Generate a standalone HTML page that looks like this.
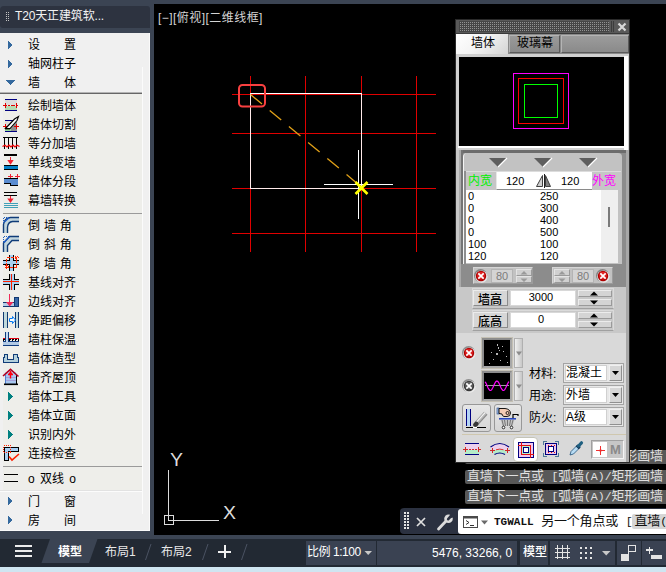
<!DOCTYPE html>
<html lang="zh-CN">
<head>
<meta charset="utf-8">
<title>T20天正建筑软件</title>
<style>
html,body{margin:0;padding:0;}
body{width:666px;height:572px;overflow:hidden;background:#3b4453;position:relative;
 font-family:"Liberation Sans","Noto Sans CJK SC",sans-serif;font-size:12px;color:#000;}
.abs{position:absolute;}
#canvas{left:154px;top:4px;width:512px;height:531px;background:#000;}
#vp{left:158px;top:10px;color:#d4d4d4;font-size:12px;line-height:16px;white-space:nowrap;letter-spacing:0.45px;}
/* left panel */
#ltitle{left:0;top:6px;width:150px;height:22px;background:#2d3340;border-radius:4px 3px 0 3px;}
#ltitle span{position:absolute;left:15px;top:2px;color:#f2f2f2;font-size:12px;line-height:17px;white-space:nowrap;letter-spacing:-0.15px;}
#lpanel{left:0;top:33px;width:150px;height:498px;background:#f0f0f0;box-shadow:inset -1px -1px 0 #fafafa;}
#linner{left:3px;top:94px;width:139px;height:396px;background:#eeeeea;}
#lvl{left:142px;top:67px;width:1px;height:447px;background:#fbfbfb;}
#lhl{left:0;top:490px;width:142px;height:2px;background:linear-gradient(#e2e2e2 50%,#fcfcfc 50%);}
.mi{position:absolute;left:28px;height:19px;line-height:19px;font-size:12px;color:#000;white-space:pre;word-spacing:0.6px;}
.sep{position:absolute;left:0;width:142px;height:1px;background:#9a9a9a;}
/* status bar */
#sbar{left:0;top:539px;width:666px;height:28px;background:#222933;}
#sbot{left:0;top:567px;width:666px;height:5px;background:#cfe5f1;}
.st{position:absolute;color:#e8e8e8;font-size:12px;line-height:16px;white-space:nowrap;}

.cl{position:absolute;left:465px;height:14px;width:230px;background:#585858;border-radius:2px;color:#e0e0e0;font-size:13px;line-height:14px;white-space:pre;font-family:"Liberation Mono","Noto Sans CJK SC",monospace;padding-left:2px;letter-spacing:-0.2px;}
.cl i,.cmd i{font-style:normal;font-size:11.5px;letter-spacing:0;}
#cbar{left:400px;top:508px;width:266px;height:26px;background:#2b3140;border-radius:4px 0 0 4px;}
#cwhite{left:458px;top:509px;width:208px;height:25px;background:#fff;border-radius:3px 0 0 3px;}
.cmd{position:absolute;left:494px;top:514px;height:16px;line-height:16px;font-size:13px;color:#111;white-space:pre;font-family:"Liberation Mono","Noto Sans CJK SC",monospace;letter-spacing:-0.2px;}
.cmd b{font-size:11px;letter-spacing:0;}
.cmd .hl{background:#d6d6d6;border-radius:2px;padding:0 0 0 3px;margin-left:-1px;}
.sb{position:absolute;top:541px;height:24px;background:#3a4252;}
</style>
</head>
<body>
<div id="canvas" class="abs"></div>
<div id="vp" class="abs">[−][俯视][二维线框]</div>

<svg class="abs" style="left:0;top:0" width="666" height="572" viewBox="0 0 666 572">
<g shape-rendering="crispEdges" fill="#e00000">
<rect x="250" y="76" width="1" height="176"/><rect x="305" y="76" width="1" height="176"/><rect x="361" y="76" width="1" height="176"/><rect x="416" y="76" width="1" height="176"/>
<rect x="232" y="94" width="204" height="1"/><rect x="232" y="133" width="204" height="1"/><rect x="232" y="188" width="204" height="1"/><rect x="232" y="233" width="204" height="1"/>
</g>
<g shape-rendering="crispEdges" fill="#ffeaea">
<rect x="250" y="93" width="112" height="1" fill="#fff"/>
<rect x="250" y="93" width="1" height="96"/>
<rect x="361" y="93" width="1" height="96"/>
<rect x="250" y="188" width="112" height="1"/>
</g>
<rect x="239" y="85" width="26" height="21.500" rx="3.500" fill="none" stroke="#f84040" stroke-width="2"/>
<path d="M250.500 94.500 L358.500 184.500" stroke="#e0a018" stroke-width="1.300" stroke-dasharray="15 10" fill="none"/>
<g shape-rendering="crispEdges" fill="#fff">
<rect x="358" y="150" width="1" height="69"/><rect x="324" y="184" width="69" height="1"/>
</g>
<path d="M355.500 182 L367.500 194 M367.500 182 L355.500 194" stroke="#ffff00" stroke-width="2.600" fill="none"/>
<!-- UCS -->
<g shape-rendering="crispEdges" fill="none" stroke="#dcdcdc" stroke-width="1">
<path d="M168.500 470 V520.500 H219"/>
<rect x="164.500" y="515.500" width="9" height="9"/>
</g>
<text x="176.500" y="466" font-family="Liberation Sans, sans-serif" font-size="17.500" fill="#dcdcdc" text-anchor="middle" textLength="13" lengthAdjust="spacingAndGlyphs">Y</text>
<text x="229.500" y="519" font-family="Liberation Sans, sans-serif" font-size="17.500" fill="#dcdcdc" text-anchor="middle" textLength="13" lengthAdjust="spacingAndGlyphs">X</text>
</svg>

<!-- LEFT PANEL -->
<div id="ltitle" class="abs"><span>T20天正建筑软...</span></div>
<svg class="abs" style="left:0;top:6px" width="14" height="22" viewBox="0 0 14 22"><g fill="#c4c4c4" shape-rendering="crispEdges"><rect x="6" y="6" width="1" height="1"/><rect x="6" y="8" width="1" height="1"/><rect x="6" y="10" width="1" height="1"/><rect x="6" y="12" width="1" height="1"/><rect x="6" y="14" width="1" height="1"/><rect x="8" y="6" width="1" height="1"/><rect x="8" y="8" width="1" height="1"/><rect x="8" y="10" width="1" height="1"/><rect x="8" y="12" width="1" height="1"/><rect x="8" y="14" width="1" height="1"/></g></svg>
<div id="lpanel" class="abs"></div>
<div id="linner" class="abs"></div><div id="lvl" class="abs"></div><div id="lhl" class="abs"></div>
<div id="lmenu" class="abs" style="left:0;top:0;">
<div class="sep" style="top:92px;background:#b4b4b4;"></div><div class="sep" style="top:93px;background:#666;"></div>
<div class="sep" style="top:213px;left:3px;width:139px;"></div>
<div class="sep" style="top:466px;left:3px;width:139px;"></div>
<div class="mi" style="top:35.5px">设　　置</div>
<div class="mi" style="top:54.5px">轴网柱子</div>
<div class="mi" style="top:73.5px">墙　　体</div>
<div class="mi" style="top:97px">绘制墙体</div>
<div class="mi" style="top:116px">墙体切割</div>
<div class="mi" style="top:135px">等分加墙</div>
<div class="mi" style="top:154px">单线变墙</div>
<div class="mi" style="top:173px">墙体分段</div>
<div class="mi" style="top:192px">幕墙转换</div>
<div class="mi" style="top:216.5px">倒 墙 角</div>
<div class="mi" style="top:235.5px">倒 斜 角</div>
<div class="mi" style="top:254.5px">修 墙 角</div>
<div class="mi" style="top:273.5px">基线对齐</div>
<div class="mi" style="top:292.5px">边线对齐</div>
<div class="mi" style="top:311.5px">净距偏移</div>
<div class="mi" style="top:330.5px">墙柱保温</div>
<div class="mi" style="top:349.5px">墙体造型</div>
<div class="mi" style="top:368.5px">墙齐屋顶</div>
<div class="mi" style="top:387.5px">墙体工具</div>
<div class="mi" style="top:406.5px">墙体立面</div>
<div class="mi" style="top:425.5px">识别内外</div>
<div class="mi" style="top:444.5px">连接检查</div>
<div class="mi" style="top:469.5px;word-spacing:2px">o 双线 o</div>
<div class="mi" style="top:492.5px">门　　窗</div>
<div class="mi" style="top:511.5px">房　　间</div>
</div>

<svg class="abs" style="left:0;top:0" width="160" height="540" viewBox="0 0 160 540">
<g shape-rendering="crispEdges">
<!-- triangles top -->
<path d="M8 40.5 L13 45 L8 49.5Z" fill="#34699e"/>
<path d="M8 59.5 L13 64 L8 68.5Z" fill="#34699e"/>
<path d="M6 80 L15 80 L10.5 85Z" fill="#34699e"/>
<path d="M8 496.5 L13 501 L8 505.5Z" fill="#34699e"/>
<path d="M8 515.5 L13 520 L8 524.5Z" fill="#34699e"/>
<!-- teal triangles -->
<path d="M8 392 L13 396.5 L8 401Z" fill="#008080"/>
<path d="M8 411 L13 415.5 L8 420Z" fill="#008080"/>
<path d="M8 430 L13 434.5 L8 439Z" fill="#008080"/>
<!-- i1 绘制墙体 -->
<rect x="5" y="99" width="12" height="1" fill="#000080"/>
<rect x="5" y="100" width="12" height="5" fill="#dcdcdc"/>
<rect x="5" y="106" width="12" height="4" fill="#b4dcb4"/>
<rect x="5" y="110" width="12" height="1" fill="#000080"/>
<path d="M3 105.5H19" stroke="#e00000" stroke-width="1" stroke-dasharray="4 1 2 1"/>
<rect x="5" y="103" width="1" height="5" fill="#e00000"/><rect x="16" y="103" width="1" height="5" fill="#e00000"/>
<!-- i2 墙体切割 -->
<rect x="5" y="120" width="8" height="1" fill="#000080"/>
<rect x="5" y="121" width="8" height="5" fill="#dcdcdc"/>
<path d="M17 121 L17 131 L8 131Z" fill="#909090"/>
<rect x="5" y="129" width="6" height="2" fill="#98dc98"/>
<rect x="5" y="131" width="12" height="1" fill="#000080"/>
<rect x="3" y="126" width="5" height="1" fill="#e00000"/><rect x="14" y="126" width="5" height="1" fill="#e00000"/>
<rect x="5" y="124" width="1" height="5" fill="#e00000"/><rect x="16" y="124" width="1" height="5" fill="#e00000"/>
</g>
<path d="M5.500 128.500 L14.500 119 L18.500 116.500 L17 120.500 L10 128.500Z" fill="#fff" stroke="#000" stroke-width="1.100"/>
<path d="M5 128.700 H10" stroke="#000" stroke-width="1.400"/>
<g shape-rendering="crispEdges">
<!-- i3 等分加墙 -->
<rect x="3" y="137" width="15" height="1" fill="#000"/>
<rect x="4" y="137" width="1" height="12" fill="#000"/><rect x="8" y="137" width="1" height="12" fill="#000"/><rect x="12" y="137" width="1" height="12" fill="#000"/><rect x="16" y="137" width="1" height="12" fill="#000"/>
</g>
<path d="M2.500 146.500 L5 145.200 L7 147 L9 145.200 L11 147 L13 145.200 L15 147 L17 145.200 L19.500 146.500" fill="none" stroke="#f00000" stroke-width="1.300"/>
<g shape-rendering="crispEdges">
<!-- i4 单线变墙 -->
<rect x="4" y="154" width="13" height="2" fill="#000"/>
<rect x="10" y="157" width="1" height="6" fill="#f02030"/>
</g><path d="M7.300 160 H13.700 L10.500 164.800Z" fill="#f02030"/><g shape-rendering="crispEdges">
<rect x="4" y="165" width="14" height="1" fill="#000"/>
<rect x="4" y="166" width="14" height="3" fill="#0080c8"/>
<rect x="4" y="169" width="14" height="1" fill="#000"/>
<!-- i5 墙体分段 -->
<rect x="10" y="174" width="1" height="5" fill="#f02030"/><rect x="8" y="176" width="5" height="1" fill="#f02030"/>
<rect x="17" y="174" width="1" height="5" fill="#f02030"/><rect x="15" y="176" width="5" height="1" fill="#f02030"/>
<path d="M4 179 H18 V185 H10 V183 H4Z" fill="#5a8cd0"/>
<rect x="4" y="178" width="14" height="1" fill="#000"/>
<rect x="4" y="183" width="7" height="1" fill="#000"/><rect x="10" y="183" width="1" height="2" fill="#000"/><rect x="10" y="185" width="8" height="1" fill="#000"/>
<!-- i6 幕墙转换 -->
<rect x="4" y="192" width="13" height="1" fill="#000"/><rect x="4" y="195" width="13" height="1" fill="#000"/>
<rect x="10" y="196" width="1" height="6" fill="#f02030"/>
</g><path d="M7.300 198.500 H13.700 L10.500 203Z" fill="#f02030"/><g shape-rendering="crispEdges">
<rect x="4" y="203" width="14" height="1" fill="#40a0b8"/><rect x="4" y="205" width="14" height="1" fill="#40a0b8"/><rect x="4" y="207" width="14" height="1" fill="#40a0b8"/>
</g>
</svg>
<svg class="abs" style="left:0;top:0" width="160" height="540" viewBox="0 0 160 540">
<!-- i7 倒墙角 -->
<path d="M3 233 V224 Q4 218 10.500 217 H19 V222 H12.500 Q8 222.500 8 227 V233Z" fill="#c2d6de"/>
<path d="M3.500 233 V224.500 Q4.500 218 10.500 217.500 H19 M7.500 233 V227 Q8 222 12.500 221.500 H19" fill="none" stroke="#103c78" stroke-width="1.400"/>
<path d="M4.500 222 L9 217.800" stroke="#2060d0" stroke-width="1.200"/>
<path d="M3.500 217.500 H9 M3.500 217.500 V223" stroke="#2060c0" stroke-width="1" stroke-dasharray="1 1" shape-rendering="crispEdges"/>
<!-- i8 倒斜角 -->
<path d="M3 252 V243 L9.500 236 H19 V241 H12 L8 245.500 V252Z" fill="#c2d6de"/>
<path d="M3.500 252 V243 L9.500 236.500 H19 M7.500 252 V245.500 L12 240.500 H19" fill="none" stroke="#103c78" stroke-width="1.400"/>
<path d="M4 242.500 L9.500 236.700" stroke="#2060d0" stroke-width="1.200"/>
<path d="M3.500 236.500 H9 M3.500 236.500 V242" stroke="#2060c0" stroke-width="1" stroke-dasharray="1 1" shape-rendering="crispEdges"/>
<g shape-rendering="crispEdges">
<!-- i9 修墙角 -->
<rect x="10" y="255" width="3" height="16" fill="#a8d0f0"/><rect x="3" y="261" width="16" height="3" fill="#a8d0f0"/>
<rect x="9" y="255" width="1" height="6" fill="#000"/><rect x="13" y="255" width="1" height="6" fill="#000"/>
<rect x="9" y="264" width="1" height="7" fill="#000"/><rect x="13" y="264" width="1" height="7" fill="#000"/>
<rect x="3" y="260" width="7" height="1" fill="#000"/><rect x="13" y="260" width="6" height="1" fill="#000"/>
<rect x="3" y="264" width="7" height="1" fill="#000"/><rect x="13" y="264" width="6" height="1" fill="#000"/>
<rect x="6.500" y="257.500" width="10" height="10" fill="none" stroke="#ff2800" stroke-width="1" stroke-dasharray="3 1"/>
<path d="M15 256 l3 3 M17 256 l2 2 M15 258 l2 2 M5 265 l3 3 M5 267 l2 2 M7 265 l2 2" stroke="#ff2800" stroke-width="1" stroke-dasharray="1 1"/>
<!-- i10 基线对齐 -->
<rect x="10" y="274" width="4" height="16" fill="#a8d0f0"/><rect x="3" y="280" width="16" height="4" fill="#a8d0f0"/>
<rect x="9" y="274" width="1" height="6" fill="#000"/><rect x="14" y="274" width="1" height="6" fill="#000"/>
<rect x="9" y="284" width="1" height="6" fill="#000"/><rect x="14" y="284" width="1" height="6" fill="#000"/>
<rect x="3" y="279" width="7" height="1" fill="#000"/><rect x="14" y="279" width="5" height="1" fill="#000"/>
<rect x="3" y="284" width="7" height="1" fill="#000"/><rect x="14" y="284" width="5" height="1" fill="#000"/>
<rect x="11" y="274" width="1" height="16" fill="#ff2000"/><rect x="3" y="281" width="16" height="1" fill="#ff2000"/>
<!-- i11 边线对齐 -->
<rect x="3" y="303" width="12" height="3" fill="#b4cce8"/>
<rect x="3" y="302" width="12" height="1" fill="#103870"/>
<rect x="14" y="297" width="5" height="10" fill="#3868a8" stroke="none"/>
<rect x="14" y="297" width="5" height="1" fill="#103870"/><rect x="14" y="297" width="1" height="10" fill="#103870"/><rect x="18" y="297" width="1" height="10" fill="#103870"/>
<rect x="3" y="306" width="16" height="1" fill="#103870"/>
<rect x="9" y="294" width="1" height="9" fill="#f02858"/>
</g>
<path d="M6 302 H13.500 L9.700 306.500Z" fill="#f02858"/>
<g shape-rendering="crispEdges">
<!-- i12 净距偏移 -->
<rect x="4" y="312" width="3" height="16" fill="#c0d8dc"/><rect x="3" y="312" width="1" height="16" fill="#103870"/><rect x="7" y="312" width="1" height="16" fill="#103870"/>
<rect x="16" y="312" width="2" height="16" fill="#c0d8dc"/><rect x="15" y="312" width="1" height="16" fill="#103870"/><rect x="18" y="312" width="1" height="16" fill="#103870"/>
</g>
<path d="M9.500 318.500 H12.500 V316.500 L15.500 320 L12.500 323.500 V321.500 H9.500Z" fill="#fff" stroke="#0078f0" stroke-width="1"/>
<g shape-rendering="crispEdges">
<!-- i13 墙柱保温 -->
<rect x="6" y="332" width="2" height="10" fill="#c4d8f0"/><rect x="5" y="332" width="1" height="10" fill="#103c80"/><rect x="8" y="332" width="1" height="10" fill="#103c80"/>
<rect x="3" y="342" width="16" height="3" fill="#b0c8e4"/>
<rect x="3" y="341" width="3" height="1" fill="#103c80"/><rect x="8" y="341" width="11" height="1" fill="#103c80"/>
<rect x="3" y="345" width="16" height="1" fill="#103c80"/>
<rect x="3" y="338" width="2" height="1" fill="#e00010"/><rect x="9" y="338" width="10" height="1" fill="#e00010"/>
<path d="M3 339.500 H5 M9 339.500 H19" stroke="#000" stroke-width="1" stroke-dasharray="2 1"/>
<path d="M3 340.500 H5 M9 340.500 H19" stroke="#000" stroke-width="1" stroke-dasharray="1 2"/>
<!-- i14 墙体造型 -->
<path d="M3.500 357.500 H4.500 V354.500 H7.500 V359.500 H13.500 V354.500 H17.500 V357.500 H18.500 V362.500 H3.500Z" fill="#b4d0dc" stroke="#103c78" stroke-width="1"/>
</g>
<!-- i15 墙齐屋顶 -->
<rect x="5" y="372" width="11" height="12" fill="#a8c8f0"/>
<path d="M5 373 L10.500 369 L16 373Z" fill="#c8e0fa"/>
<path d="M5 377.500 H16 M5 380.500 H16" stroke="#a090d0" stroke-width="1" opacity=".7"/>
<rect x="16" y="375" width="1" height="9" fill="#000"/>
<rect x="5" y="375" width="1" height="9" fill="#5080d0"/>
<path d="M3 376 L10.500 369.300 L18.500 376.500" fill="none" stroke="#b00020" stroke-width="1.600"/>
<rect x="4" y="383.500" width="14" height="1.600" fill="#000"/>
<path d="M10.500 371 V378.500 M8 374.500 H13" stroke="#ff0010" stroke-width="1.400"/>
<path d="M8.500 374 L10.500 371 L12.500 374Z" fill="#ff0010"/>
<g shape-rendering="crispEdges">
<!-- i16 连接检查 -->
<rect x="5" y="448" width="13" height="3" fill="#a8d0f4"/><rect x="5" y="448" width="3" height="12" fill="#a8d0f4"/>
<path d="M4.500 447.500 H18.500 V451.500 H8.500 V460.500 H4.500Z" fill="none" stroke="#000" stroke-width="1"/>
<rect x="3.500" y="445.500" width="7" height="7" fill="none" stroke="#ff2000" stroke-width="1" stroke-dasharray="1 1"/>
</g>
<path d="M9 456.500 L12 460 L19 454" fill="none" stroke="#ff2000" stroke-width="1.600"/>
<g shape-rendering="crispEdges">
<!-- i17 双线 -->
<rect x="4" y="474" width="14" height="1" fill="#000"/><rect x="4" y="481" width="14" height="1" fill="#000"/>
</g>
</svg>

<!-- COMMAND HISTORY -->
<div class="cl" style="top:450px;">直墙下一点或 <i>[</i>弧墙<i>(A)/</i>矩形画墙</div>
<div class="cl" style="top:470px;">直墙下一点或 <i>[</i>弧墙<i>(A)/</i>矩形画墙</div>
<div class="cl" style="top:490px;">直墙下一点或 <i>[</i>弧墙<i>(A)/</i>矩形画墙</div>
<!-- RIGHT PANEL -->
<style>
#rp{left:455px;top:19px;width:175px;height:444px;background:#e4e4e4;box-sizing:border-box;border:1px solid #2a2a2a;font-size:12px;}
#rp div,#rp span{position:absolute;box-sizing:border-box;}
#rp .t{white-space:nowrap;line-height:14px;}
#rp .n{font-size:11px;line-height:12px;white-space:nowrap;}
.grip{background-image:linear-gradient(90deg,#454545 50%,transparent 50%),linear-gradient(#454545 50%,#929292 50%);background-size:2px 2px;}
</style>
<div id="rp" class="abs">
<!-- coordinates inside #rp are page - (456,20) -->
<div style="left:0;top:0;width:173px;height:13px;background:#595959;"></div>
<div class="grip" style="left:3px;top:1px;width:150px;height:11px;"></div>
<div style="left:155px;top:1px;width:1px;height:11px;background:#3c3c3c;"></div><div style="left:157px;top:1px;width:1px;height:11px;background:#3c3c3c;"></div>
<div style="left:0;top:13px;width:173px;height:1px;background:#3a3a3a;"></div>
<svg style="position:absolute;left:160px;top:1px" width="12" height="12" viewBox="0 0 12 12"><path d="M2.500 2.500 L9.500 9.500 M9.500 2.500 L2.500 9.500" stroke="#d8d8d8" stroke-width="2.200" fill="none"/></svg>
<!-- tabs -->
<div style="left:0;top:14px;width:173px;height:20px;background:#8a8a8a;"></div>
<div style="left:0;top:14px;width:52px;height:20px;background:linear-gradient(135deg,#ffffff 0%,#f4f4f4 45%,#d4d4d4 100%);"></div>
<div class="t" style="left:15px;top:16px;">墙体</div>
<div style="left:53px;top:15px;width:51px;height:18px;background:linear-gradient(#9a9a9a,#8a8a8a);border:1px solid #b4b4b4;border-right-color:#5a5a5a;border-bottom-color:#5a5a5a;"></div>
<div class="t" style="left:61px;top:16px;">玻璃幕</div>
<div style="left:105px;top:15px;width:68px;height:18px;background:linear-gradient(#9c9c9c,#8a8a8a);border:1px solid #b4b4b4;border-right-color:#5a5a5a;border-bottom-color:#5a5a5a;"></div>
<!-- preview -->
<div style="left:0;top:34px;width:173px;height:96px;background:#d0d0d0;"></div>
<div style="left:168px;top:36px;width:4px;height:94px;background:#fff;"></div>
<div style="left:2px;top:126px;width:170px;height:2px;background:#fff;"></div>
<div style="left:3px;top:37px;width:165px;height:89px;background:#000;"></div>
<div style="left:57px;top:53px;width:56px;height:56px;border:1px solid #ff00ff;"></div>
<div style="left:62px;top:58px;width:46px;height:46px;border:1px solid #ff0000;"></div>
<div style="left:68px;top:64px;width:34px;height:34px;border:1px solid #00ff00;"></div>
<!-- middle gray frame -->
<div style="left:0;top:130px;width:173px;height:183px;background:#c8c8c8;"></div>
<div style="left:3px;top:130px;width:167px;height:137px;background:#8c8c8c;"></div>
<div style="left:3px;top:130px;width:2px;height:137px;background:#aaaaaa;"></div>
<div style="left:5px;top:130px;width:165px;height:3px;background:#6c6c6c;"></div>
<div style="left:5px;top:130px;width:2px;height:114px;background:#747474;"></div>
<div style="left:7px;top:133px;width:159px;height:111px;background:#c2c2c2;border-radius:4px 4px 0 0;border-left:1px solid #f4f4f4;"></div>

<!-- triangles -->
<svg style="position:absolute;left:0;top:0" width="173" height="442" viewBox="0 0 173 442">
<g>
<path d="M33 138 H51 L42 147Z" fill="#5e5e5e"/><path d="M51 138 L42 147" stroke="#fff" stroke-width="1.200"/>
<path d="M78 138 H96 L87 147Z" fill="#5e5e5e"/><path d="M96 138 L87 147" stroke="#fff" stroke-width="1.200"/>
<path d="M123 138 H141 L132 147Z" fill="#5e5e5e"/><path d="M141 138 L132 147" stroke="#fff" stroke-width="1.200"/>
</g>
</svg>
<!-- width row: page y 171..189 => 151..169 -->
<div style="left:10px;top:151px;width:155px;height:19px;background:#c6c6c6;border-top:1px solid #dcdcdc;"></div>
<div style="left:40px;top:152px;width:96px;height:18px;background:#fff;border-bottom:1px solid #8a8a8a;border-left:1px solid #e8e8e8;"></div>
<div class="t" style="left:12px;top:154px;color:#00f000;">内宽</div>
<div class="t" style="left:136px;top:154px;color:#ff00ff;">外宽</div>
<div class="n" style="left:50px;top:155px;">120</div>
<div class="n" style="left:105px;top:155px;">120</div>
<svg style="position:absolute;left:78px;top:154px" width="20" height="14" viewBox="0 0 20 14">
<path d="M8.500 1.500 V12.500 H2.500Z" fill="#d0d0d0" stroke="#404040" stroke-width="1"/>
<path d="M11.500 1.500 V12.500 H16.500Z" fill="#808080" stroke="#404040" stroke-width="1"/>
<path d="M10 0 V14" stroke="#202020" stroke-width="1" shape-rendering="crispEdges"/>
</svg>
<!-- list: page y190..263 => 170..243; x 466..618 => 10..162 -->
<div style="left:10px;top:170px;width:152px;height:73px;background:#fff;"></div>
<div style="left:145px;top:170px;width:17px;height:73px;background:#efefef;"></div>
<div style="left:8px;top:151px;width:2px;height:93px;background:#8e8e8e;"></div>
<div style="left:152px;top:187px;width:2px;height:20px;background:#7a7a7a;"></div>
<div class="n" style="left:12px;top:170px;line-height:12px;white-space:pre;">0
0
0
0
100
120</div>
<div class="n" style="left:84px;top:170px;line-height:12px;white-space:pre;">250
300
400
500
100
120</div>

<!-- 80 row : rp y 247..264 -->
<div style="left:17px;top:247px;width:60px;height:17px;background:#c2c2c2;border:1px solid #d6d6d6;border-right-color:#9c9c9c;border-bottom-color:#9c9c9c;"></div>
<div style="left:96px;top:247px;width:61px;height:17px;background:#c2c2c2;border:1px solid #d6d6d6;border-right-color:#9c9c9c;border-bottom-color:#9c9c9c;"></div>
<div style="left:35px;top:249px;width:22px;height:14px;background:#d4d4d4;border:1px solid #b4b4b4;"></div>
<div class="n" style="left:40px;top:250px;color:#7c7c7c;">80</div>
<div style="left:116px;top:249px;width:22px;height:14px;background:#d4d4d4;border:1px solid #b4b4b4;"></div>
<div class="n" style="left:121px;top:250px;color:#7c7c7c;">80</div>
<div style="left:60px;top:249px;width:16px;height:7px;background:#d0d0d0;border:1px solid #e4e4e4;border-right-color:#9a9a9a;border-bottom-color:#9a9a9a;"></div>
<div style="left:60px;top:256px;width:16px;height:7px;background:#d0d0d0;border:1px solid #e4e4e4;border-right-color:#9a9a9a;border-bottom-color:#9a9a9a;"></div>
<div style="left:98px;top:249px;width:16px;height:7px;background:#d0d0d0;border:1px solid #e4e4e4;border-right-color:#9a9a9a;border-bottom-color:#9a9a9a;"></div>
<div style="left:98px;top:256px;width:16px;height:7px;background:#d0d0d0;border:1px solid #e4e4e4;border-right-color:#9a9a9a;border-bottom-color:#9a9a9a;"></div>
<svg style="position:absolute;left:17px;top:248px" width="16" height="16" viewBox="0 0 16 16"><circle cx="7.600" cy="7.600" r="6.600" fill="#505050" opacity=".55"/><circle cx="8.400" cy="8.600" r="6.200" fill="#f4f4f4" opacity=".8"/><circle cx="8" cy="8" r="5.200" fill="#b00000"/><circle cx="8" cy="7.600" r="3.800" fill="#f03030" opacity=".75"/><path d="M5.900 5.900 L10.100 10.100 M10.100 5.900 L5.900 10.100" stroke="#fff" stroke-width="1.700" stroke-linecap="square"/></svg><svg style="position:absolute;left:139px;top:248px" width="16" height="16" viewBox="0 0 16 16"><circle cx="7.600" cy="7.600" r="6.600" fill="#505050" opacity=".55"/><circle cx="8.400" cy="8.600" r="6.200" fill="#f4f4f4" opacity=".8"/><circle cx="8" cy="8" r="5.200" fill="#b00000"/><circle cx="8" cy="7.600" r="3.800" fill="#f03030" opacity=".75"/><path d="M5.900 5.900 L10.100 10.100 M10.100 5.900 L5.900 10.100" stroke="#fff" stroke-width="1.700" stroke-linecap="square"/></svg>
<!-- 墙高 / 底高 rows -->
<div style="left:16px;top:268px;width:142px;height:21px;border:1px solid #dadada;border-bottom-color:#a0a0a0;"></div>
<div style="left:16px;top:290px;width:142px;height:21px;border:1px solid #dadada;border-bottom-color:#a0a0a0;"></div>
<div style="left:17px;top:270px;width:35px;height:16px;background:#d6d6d6;border:1px solid #ececec;border-right-color:#8c8c8c;border-bottom-color:#8c8c8c;"></div>
<div class="t" style="left:22px;top:273px;font-weight:500;">墙高</div>
<div style="left:54px;top:270px;width:66px;height:16px;background:#fff;border:1px solid #d8d8d8;"></div>
<div class="n" style="left:52px;top:271px;width:66px;text-align:center;">3000</div>
<div style="left:122px;top:270px;width:34px;height:7px;background:#d4d4d4;border:1px solid #ececec;border-right-color:#9a9a9a;border-bottom-color:#9a9a9a;"></div>
<div style="left:122px;top:279px;width:34px;height:7px;background:#d4d4d4;border:1px solid #ececec;border-right-color:#9a9a9a;border-bottom-color:#9a9a9a;"></div>
<div style="left:17px;top:292px;width:35px;height:16px;background:#d6d6d6;border:1px solid #ececec;border-right-color:#8c8c8c;border-bottom-color:#8c8c8c;"></div>
<div class="t" style="left:22px;top:295px;font-weight:500;">底高</div>
<div style="left:54px;top:292px;width:66px;height:16px;background:#fff;border:1px solid #d8d8d8;"></div>
<div class="n" style="left:52px;top:293px;width:66px;text-align:center;">0</div>
<div style="left:122px;top:292px;width:34px;height:7px;background:#d4d4d4;border:1px solid #ececec;border-right-color:#9a9a9a;border-bottom-color:#9a9a9a;"></div>
<div style="left:122px;top:301px;width:34px;height:7px;background:#d4d4d4;border:1px solid #ececec;border-right-color:#9a9a9a;border-bottom-color:#9a9a9a;"></div>
<svg style="position:absolute;left:0;top:0" width="173" height="442" viewBox="0 0 173 442">
<path d="M64.500 254.500 H71.500 L68 251Z M64.500 258.500 H71.500 L68 262Z M102.500 254.500 H109.500 L106 251Z M102.500 258.500 H109.500 L106 262Z" fill="#9a9a9a"/>
<path d="M134 275.500 H142 L138 271.500Z M134 280.500 H142 L138 284.500Z M134 297.500 H142 L138 293.500Z M134 302.500 H142 L138 306.500Z" fill="#000"/>
</svg>

<!-- lower section -->
<div style="left:0;top:313px;width:173px;height:129px;background:#d9d9d9;"></div>
<div style="left:170px;top:130px;width:3px;height:312px;background:#a8a8a8;"></div>
<svg style="position:absolute;left:5px;top:325px" width="16" height="16" viewBox="0 0 16 16"><circle cx="7.600" cy="7.600" r="6.600" fill="#505050" opacity=".55"/><circle cx="8.400" cy="8.600" r="6.200" fill="#f4f4f4" opacity=".8"/><circle cx="8" cy="8" r="5.200" fill="#b00000"/><circle cx="8" cy="7.600" r="3.800" fill="#f03030" opacity=".75"/><path d="M5.900 5.900 L10.100 10.100 M10.100 5.900 L5.900 10.100" stroke="#fff" stroke-width="1.700" stroke-linecap="square"/></svg><svg style="position:absolute;left:5px;top:358px" width="16" height="16" viewBox="0 0 16 16"><circle cx="7.600" cy="7.600" r="6.600" fill="#505050" opacity=".55"/><circle cx="8.400" cy="8.600" r="6.200" fill="#f4f4f4" opacity=".8"/><circle cx="8" cy="8" r="5.200" fill="#383838"/><circle cx="8" cy="7.600" r="3.800" fill="#707070" opacity=".75"/><path d="M5.900 5.900 L10.100 10.100 M10.100 5.900 L5.900 10.100" stroke="#fff" stroke-width="1.700" stroke-linecap="square"/></svg>
<div style="left:26px;top:318px;width:30px;height:30px;background:#000;border:2px solid #8c8c8c;border-right-color:#a8a8a8;border-bottom-color:#a8a8a8;box-shadow:0 0 0 1px #c4c0b4;"></div>
<div style="left:26px;top:351px;width:30px;height:30px;background:#000;border:2px solid #8c8c8c;border-right-color:#a8a8a8;border-bottom-color:#a8a8a8;box-shadow:0 0 0 1px #c4c0b4;"></div>
<div style="left:58px;top:318px;width:9px;height:30px;background:linear-gradient(90deg,#f0f0f0,#c8c8c8);border:1px solid #b0b0b0;"></div>
<div style="left:58px;top:351px;width:9px;height:30px;background:linear-gradient(90deg,#f0f0f0,#c8c8c8);border:1px solid #b0b0b0;"></div>
<svg style="position:absolute;left:0;top:0" width="173" height="442" viewBox="0 0 173 442">
<path d="M60 331.500 H66 L63 335.500Z M60 364.500 H66 L63 368.500Z" fill="#8c8c8c"/>
<g fill="#b8b8b8"><rect x="41" y="324" width="1" height="2"/><rect x="42" y="327" width="1" height="2"/><rect x="43" y="330" width="1" height="1"/><rect x="40" y="333" width="2" height="2"/><rect x="35" y="332" width="1" height="1"/><rect x="47" y="331" width="1" height="1"/><rect x="50" y="336" width="1" height="1"/><rect x="37" y="339" width="1" height="1"/><rect x="44" y="340" width="1" height="1"/><rect x="33" y="343" width="1" height="1"/><rect x="46" y="326" width="1" height="1"/><rect x="51" y="342" width="1" height="1"/></g>
<path d="M29 365.500 H53" stroke="#a0a0a0" stroke-width="1" shape-rendering="crispEdges"/>
<path d="M29.0 361.75 L29.5 362.44 L30.0 363.32 L30.5 364.35 L31.0 365.46 L31.5 366.59 L32.0 367.68 L32.5 368.65 L33.0 369.46 L33.5 370.06 L34.0 370.41 L34.5 370.49 L35.0 370.30 L35.5 369.85 L36.0 369.16 L36.5 368.28 L37.0 367.25 L37.5 366.14 L38.0 365.01 L38.5 363.92 L39.0 362.95 L39.5 362.14 L40.0 361.54 L40.5 361.19 L41.0 361.11 L41.5 361.30 L42.0 361.75 L42.5 362.44 L43.0 363.32 L43.5 364.35 L44.0 365.46 L44.5 366.59 L45.0 367.68 L45.5 368.65 L46.0 369.46 L46.5 370.06 L47.0 370.41 L47.5 370.49 L48.0 370.30 L48.5 369.85 L49.0 369.16 L49.5 368.28 L50.0 367.25 L50.5 366.14 L51.0 365.01 L51.5 363.92 L52.0 362.95 L52.5 362.14 L53.0 361.54" fill="none" stroke="#ff00ff" stroke-width="1.200"/>
</svg>
<!-- labels + combos -->
<div class="t" style="left:73px;top:347px;">材料:</div>
<div class="t" style="left:73px;top:369px;">用途:</div>
<div class="t" style="left:73px;top:391px;">防火:</div>
<div style="left:107px;top:343px;width:61px;height:20px;border:1px solid #a4a4a4;background:#e8e8e8;"></div>
<div style="left:109px;top:345px;width:42px;height:16px;background:#fff;border:1px solid #d0d0d0;"></div>
<div class="t" style="left:110px;top:346px;">混凝土</div>
<div style="left:153px;top:345px;width:13px;height:16px;background:#d6d6d6;border:1px solid #f0f0f0;border-right-color:#909090;border-bottom-color:#909090;"></div>
<svg style="position:absolute;left:156px;top:351px" width="8" height="5" viewBox="0 0 8 5"><path d="M0 0 H7 L3.500 4Z" fill="#000"/></svg>
<div style="left:107px;top:365px;width:61px;height:20px;border:1px solid #a4a4a4;background:#e8e8e8;"></div>
<div style="left:109px;top:367px;width:42px;height:16px;background:#fff;border:1px solid #d0d0d0;"></div>
<div class="t" style="left:110px;top:368px;">外墙</div>
<div style="left:153px;top:367px;width:13px;height:16px;background:#d6d6d6;border:1px solid #f0f0f0;border-right-color:#909090;border-bottom-color:#909090;"></div>
<svg style="position:absolute;left:156px;top:373px" width="8" height="5" viewBox="0 0 8 5"><path d="M0 0 H7 L3.500 4Z" fill="#000"/></svg>
<div style="left:107px;top:387px;width:61px;height:20px;border:1px solid #a4a4a4;background:#e8e8e8;"></div>
<div style="left:109px;top:389px;width:42px;height:16px;background:#fff;border:1px solid #d0d0d0;"></div>
<div class="t" style="left:110px;top:390px;">A级</div>
<div style="left:153px;top:389px;width:13px;height:16px;background:#d6d6d6;border:1px solid #f0f0f0;border-right-color:#909090;border-bottom-color:#909090;"></div>
<svg style="position:absolute;left:156px;top:395px" width="8" height="5" viewBox="0 0 8 5"><path d="M0 0 H7 L3.500 4Z" fill="#000"/></svg>

<!-- big buttons page (462,404)-(491,432) -->
<div style="left:6px;top:384px;width:29px;height:28px;background:linear-gradient(#e6e6e6,#d6d6d6);border:1px solid #989898;border-radius:3px;"></div>
<div style="left:38px;top:384px;width:28px;height:28px;background:linear-gradient(#e6e6e6,#d6d6d6);border:1px solid #989898;border-radius:3px;"></div>
<div style="left:6px;top:414px;width:164px;height:1px;background:#cfc7ae;"></div>

<!-- selected tool button + M box -->
<div style="left:57px;top:417px;width:25px;height:25px;background:#fff;border:1px solid #c4c4b8;border-radius:4px;"></div>
<div style="left:135px;top:420px;width:33px;height:19px;background:#c6c6c6;border:1px solid #a0a0a0;border-right-color:#f4f4f4;border-bottom-color:#f4f4f4;"></div>
<div style="left:137px;top:422px;width:14px;height:15px;background:#fff;"></div>
<div style="left:152px;top:421px;width:15px;height:17px;text-align:center;font-family:'Liberation Sans',sans-serif;font-weight:bold;font-size:13px;line-height:17px;color:#8a8a8a;">M</div>
<svg style="position:absolute;left:0;top:0" width="173" height="442" viewBox="0 0 173 442">
<!-- big btn 1 -->
<g shape-rendering="crispEdges">
<rect x="11" y="389" width="4" height="17" fill="#b4d4f4"/><rect x="10" y="389" width="1" height="17" fill="#000080"/><rect x="14" y="389" width="1" height="17" fill="#000080"/>
<rect x="10" y="407" width="7" height="1" fill="#000"/><rect x="21" y="407" width="9" height="1" fill="#000"/><rect x="17" y="407" width="4" height="1" fill="#fff"/>
</g>
<path d="M20.500 403.500 L29.800 393.200" stroke="#8c8c8c" stroke-width="4.600" fill="none"/><path d="M20 402.700 L29.200 392.600" stroke="#f0f0f0" stroke-width="1.600" fill="none"/><path d="M20.800 403.800 L30 393.600" stroke="#b8b8b8" stroke-width="1.400" fill="none"/>
<ellipse cx="19.800" cy="404.300" rx="2.900" ry="2.300" fill="#383838" transform="rotate(-45 19.800 404.300)"/>
<!-- big btn 2 : hand + cart -->
<rect x="41" y="388" width="2" height="6" fill="#a8c8f0" stroke="#204080" stroke-width=".6"/>
<path d="M43 388.500 H49 Q54 389 54.500 393 Q54.500 396.500 51 396.500 H48 Q46 396 46 394 L43 393.500Z" fill="#f4ccb4" stroke="#000" stroke-width=".9"/>
<circle cx="51.500" cy="393" r="1.500" fill="#f4ccb4" stroke="#000" stroke-width=".8"/>
<path d="M57 399 V394.500 H62 V396" fill="none" stroke="#000" stroke-width="1.200"/>
<rect x="43" y="398" width="17" height="1.600" fill="#2848c0"/>
<path d="M44.500 400 H58.500 L56.500 406 H46.500Z" fill="#c4c4c4"/>
<path d="M46 400 L47.500 406 M48.500 400 L49.500 406 M51.500 400 V406 M54.500 400 L53.500 406 M57 400 L55.500 406" stroke="#6c6c6c" stroke-width=".9"/>
<circle cx="47.500" cy="407.500" r="1.300" fill="#fff" stroke="#000" stroke-width=".8"/><circle cx="55.500" cy="407.500" r="1.300" fill="#fff" stroke="#000" stroke-width=".8"/>
<!-- icon A wall : page (465..479, 443..454) -->
<g shape-rendering="crispEdges">
<rect x="9" y="424" width="14" height="6" fill="#ecd0ec"/><rect x="9" y="430" width="14" height="4" fill="#b4ecc8"/>
<rect x="9" y="423" width="14" height="1" fill="#000080"/><rect x="9" y="434" width="14" height="1" fill="#000080"/>
<path d="M7 429.500 H25" stroke="#d02828" stroke-width="1" stroke-dasharray="5 1 2 1 2 1 2 1 5"/>
<rect x="9" y="427" width="1" height="5" fill="#d02828"/><rect x="22" y="427" width="1" height="5" fill="#d02828"/>
</g>
<!-- icon B arc wall -->
<path d="M34.500 427 Q43.750 420 53 427 L51 431 Q43.750 427.500 36.500 431Z" fill="#ecd0ec"/>
<path d="M36.500 431 Q43.750 427.500 51 431 L49 434.500 Q43.750 431.500 38.500 434.500Z" fill="#b4ecc8"/>
<path d="M34.500 427 Q43.750 420 53 427" fill="none" stroke="#000080" stroke-width="1.200"/>
<path d="M38.500 434.500 Q43.750 431.500 49 434.500" fill="none" stroke="#000080" stroke-width="1.200"/>
<path d="M40 429.800 Q43.750 428.400 47.500 429.800" fill="none" stroke="#e03030" stroke-width="1"/>
<path d="M34 430.500 H39 M36.500 428 V433 M48.500 430.500 H53.500 M51 428 V433" stroke="#d02828" stroke-width="1" shape-rendering="crispEdges"/>
<!-- icon C nested squares page (518..534, 442..457.7) -->
<g shape-rendering="crispEdges">
<rect x="62.500" y="422.500" width="15" height="15" fill="#f0c8f0" stroke="#000080" stroke-width="1.300"/>
<rect x="65.500" y="425.500" width="9" height="9" fill="#b4f0cc" stroke="#e01010" stroke-width="1"/>
<rect x="67.500" y="427.500" width="5" height="5" fill="#fff" stroke="#000080" stroke-width="1.200"/>
<path d="M62 425.500 H68 M65.500 422 V428 M72 434.500 H78 M74.500 432 V438" stroke="#e01010" stroke-width="1"/>
</g>
<!-- icon D page (543..558.6, 441..456.8) -->
<g shape-rendering="crispEdges">
<path d="M87.500 425 V421.500 H91 M99 421.500 H102.500 V425 M102.500 433 V436.500 H99 M91 436.500 H87.500 V433" fill="none" stroke="#507898" stroke-width="1"/>
<rect x="89.500" y="423.500" width="11" height="11" fill="#ecc8ec" stroke="#000080" stroke-width="1"/>
<rect x="92.500" y="426.500" width="5" height="5" fill="#fff" stroke="#000080" stroke-width="1"/>
<path d="M91.500 425.500 H99" stroke="#e01010" stroke-width="1" stroke-dasharray="1 2"/>
<path d="M91.500 432.500 H99" stroke="#e01010" stroke-width="1" stroke-dasharray="1 2"/>
</g>
<!-- icon E eyedropper page (569.6,455.3)-(582,442.5) -->
<path d="M114 435 L115 431.500 L122 424.500 L124.500 427 L117.500 434Z" fill="#b8dcf4" stroke="#205078" stroke-width=".8"/>
<path d="M120.500 425.500 L123.500 428.500" stroke="#103050" stroke-width="2.400"/>
<path d="M122.500 426 L125.500 422.800" stroke="#206080" stroke-width="3.200" stroke-linecap="round"/>
<!-- plus -->
<path d="M140 430.500 H149 M144.500 426 V435" stroke="#f03030" stroke-width="1" shape-rendering="crispEdges"/>
<rect x="143.500" y="429.500" width="2" height="2" fill="#f03030"/>
</svg>
</div>
<!-- END RIGHT PANEL -->
<!-- COMMAND BAR -->
<div id="cbar" class="abs"></div>
<div id="cwhite" class="abs"></div>
<div class="cmd"><b>TGWALL</b> 另一个角点或 <i>[</i><span class="hl">直墙<i>(L)</i></span></div>
<svg class="abs" style="left:400px;top:508px" width="100" height="26" viewBox="0 0 100 26">
<g fill="#e4e4e4" shape-rendering="crispEdges">
<rect x="4" y="4" width="2" height="2"/><rect x="4" y="7" width="2" height="2"/><rect x="4" y="10" width="2" height="2"/><rect x="4" y="13" width="2" height="2"/><rect x="4" y="16" width="2" height="2"/><rect x="4" y="19" width="2" height="2"/>
<rect x="7" y="4" width="2" height="2"/><rect x="7" y="7" width="2" height="2"/><rect x="7" y="10" width="2" height="2"/><rect x="7" y="13" width="2" height="2"/><rect x="7" y="16" width="2" height="2"/><rect x="7" y="19" width="2" height="2"/>
</g>
<path d="M17 10 L25 18 M25 10 L17 18" stroke="#e0e0e0" stroke-width="1.700" fill="none"/>
<path d="M38.500 21 L46.500 12.500" stroke="#dcdcdc" stroke-width="2.800" stroke-linecap="round" fill="none"/>
<circle cx="48.500" cy="10.800" r="4.300" fill="#dcdcdc"/>
<path d="M48.300 11 L51.300 4.500 L55.500 8.500Z" fill="#2b3140"/>
<path d="M48.200 11.200 L50.800 8.200" stroke="#2b3140" stroke-width="2.600" stroke-linecap="round"/>
<rect x="63.500" y="8.500" width="14" height="11" fill="#fff" stroke="#4a4a4a" stroke-width="1"/>
<rect x="63" y="8" width="15" height="2.500" fill="#4a4a4a"/>
<path d="M66 12.500 L69 14.500 L66 16.500 M70 17.500 H74" stroke="#333" stroke-width="1" fill="none"/>
<path d="M81 12.500 H88 L84.500 16.500Z" fill="#6a6a6a"/>
</svg>
<!-- STATUS BAR -->
<div id="sbar" class="abs"></div>
<div id="sbot" class="abs"></div>
<svg class="abs" style="left:0;top:535px" width="666" height="32" viewBox="0 0 666 32">
<path d="M50 4 H97.500 L89 28 H41.500Z" fill="#3b4453"/>
<g fill="#ececec" shape-rendering="crispEdges"><rect x="15" y="10" width="17" height="2"/><rect x="15" y="15" width="17" height="2"/><rect x="15" y="20" width="17" height="2"/></g>
<path d="M151 9 L145.500 25 M208 9 L202.500 25 M247 9 L241.500 25" stroke="#4a5262" stroke-width="1" fill="none"/>
<path d="M218 16.500 H231 M224.500 10 V23" stroke="#f0f0f0" stroke-width="2" fill="none" shape-rendering="crispEdges"/>
</svg>
<div class="st" style="left:58px;top:544px;font-weight:bold;font-size:12px;color:#fff;">模型</div>
<div class="st" style="left:105px;top:544px;">布局1</div>
<div class="st" style="left:161px;top:544px;">布局2</div>
<div class="sb" style="left:306px;width:70px;"></div>
<div class="sb" style="left:377px;width:140px;"></div>
<div class="sb" style="left:520px;width:28px;"></div>
<div class="sb" style="left:550px;width:65px;"></div>
<div class="sb" style="left:617px;width:24px;"></div>
<div class="sb" style="left:642px;width:24px;"></div>
<div class="st" style="left:307px;top:544px;color:#fff;letter-spacing:-0.45px;">比例 1:100</div>
<div class="st" style="left:432px;top:545px;color:#fff;">5476, 33266, 0</div>
<div class="st" style="left:523px;top:544px;font-weight:500;font-size:12px;color:#fff;">模型</div>
<svg class="abs" style="left:300px;top:535px" width="366" height="32" viewBox="300 0 366 32">
<path d="M364.500 16 H372 L368.200 20Z" fill="#c8c8c8"/>
<path d="M602 16 H610.500 L606.200 20.500Z" fill="#c8c8c8"/>
<g stroke="#e4e4e4" stroke-width="1" fill="none" shape-rendering="crispEdges">
<path d="M557 10 V24 M562 10 V24 M567 10 V24 M554.500 13 H569.500 M554.500 17.500 H569.500 M554.500 22 H569.500"/>
</g>
<g fill="#e4e4e4" shape-rendering="crispEdges">
<rect x="580" y="12" width="2" height="2"/><rect x="585" y="12" width="2" height="2"/><rect x="590" y="12" width="2" height="2"/>
<rect x="580" y="17" width="2" height="2"/><rect x="585" y="17" width="2" height="2"/><rect x="590" y="17" width="2" height="2"/>
<rect x="580" y="22" width="2" height="2"/><rect x="585" y="22" width="2" height="2"/><rect x="590" y="22" width="2" height="2"/>
<rect x="621" y="19" width="8" height="7"/>
<rect x="628" y="10" width="1" height="10"/>
<rect x="651" y="20" width="11" height="4"/>
<rect x="646" y="14" width="7" height="1.500"/><rect x="648.800" y="11.500" width="1.500" height="7"/>
</g>
<rect x="628.500" y="10.500" width="7" height="6" fill="none" stroke="#e4e4e4" stroke-width="1" shape-rendering="crispEdges"/>
</svg>

</body>
</html>
